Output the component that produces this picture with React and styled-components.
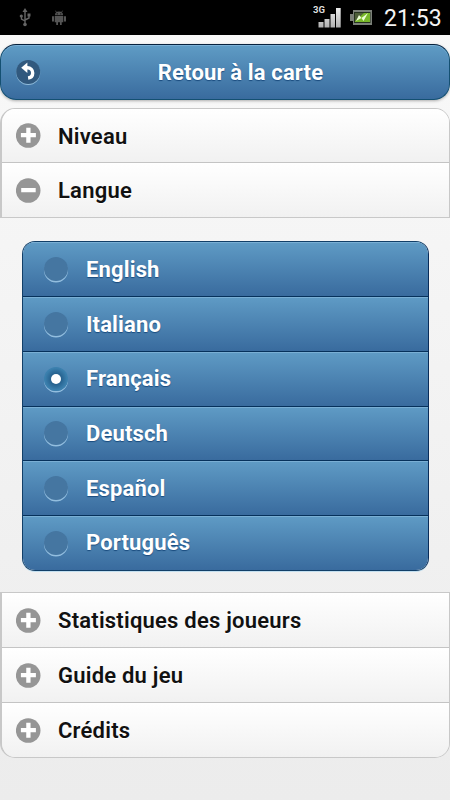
import React, { useState } from "react";
import styled, { createGlobalStyle } from "styled-components";

const GlobalStyle = createGlobalStyle`
  * {
    box-sizing: border-box;
  }
  body {
    margin: 0;
    background: #ececec;
    font-family: Roboto, "Liberation Sans", sans-serif;
  }
`;

const Page = styled.div`
  display: flex;
  flex-direction: column;
  height: 800px;
  overflow: hidden;
  background: linear-gradient(#f9f9f9, #ececec);
`;

const StatusBar = styled.div`
  display: flex;
  align-items: center;
  height: 35px;
  flex-shrink: 0;
  background: #000;
`;

const ClockText = styled.span`
  margin-left: 11px;
  width: 58px;
  padding-top: 2px;
  color: #f4f4f4;
  font-size: 23px;
  line-height: 28px;
  letter-spacing: 0.1px;
  white-space: nowrap;
`;

const BackButton = styled.button`
  display: flex;
  align-items: center;
  height: 56px;
  flex-shrink: 0;
  margin: 9px 0 8px;
  padding: 0 0 0 15px;
  border: 1px solid #145072;
  border-top: 1px solid #06213d;
  border-radius: 16px;
  background: linear-gradient(#5f9cc5, #396b9e);
  box-shadow: inset 0 1px 0 #7bb0d5, 0 1px 3px rgba(0, 0, 0, 0.3);
  font-family: inherit;
`;

const BackLabel = styled.span`
  flex: 1;
  margin-right: 9px;
  padding-top: 1px;
  color: #fff;
  font-size: 22px;
  font-weight: 700;
  letter-spacing: 0.15px;
  text-align: center;
  text-shadow: 0 1px 1px #194b7e;
`;

const Section = styled.div`
  display: flex;
  flex-direction: column;
  flex-shrink: 0;
  overflow: hidden;
  border: 1px solid #c8c8c8;
  border-left-width: 2px;
  border-radius: ${(props) => (props.$top ? "15px 15px 0 0" : "0 0 15px 15px")};
`;

const SectionRow = styled.div`
  display: flex;
  align-items: center;
  height: ${(props) => props.$height}px;
  padding-left: 14px;
  background: linear-gradient(#fff, #f1f1f1);
  color: #111;
  cursor: pointer;
  & + & {
    border-top: 1px solid #c4c4c4;
  }
`;

const RowLabel = styled.span`
  margin-left: 17px;
  padding-top: 2px;
  font-size: 22px;
  font-weight: 600;
  line-height: 28px;
  letter-spacing: 0.22px;
  white-space: nowrap;
  text-shadow: 0 1px 0 #fff;
`;

const Languages = styled.div`
  display: flex;
  flex-direction: column;
  flex-shrink: 0;
  height: 330px;
  margin: 23px 21px 21px 22px;
  overflow: hidden;
  border: 1px solid #123f68;
  border-right-color: #092c59;
  border-radius: 13px;
  box-shadow: 0 1px 0 #c3dfef;
`;

const LanguageRow = styled.label`
  display: flex;
  align-items: center;
  height: 54.7px;
  flex-shrink: 0;
  padding-left: 21px;
  background: linear-gradient(#5f9bc5, #396b9e);
  box-shadow: inset 0 1px 0 #7aafd4;
  color: #fff;
  cursor: pointer;
  &:first-child {
    height: 54.2px;
  }
  &:last-child {
    height: 55px;
  }
  & + & {
    border-top: 1px solid #06315b;
  }
`;

const HiddenRadio = styled.input`
  display: none;
`;

const Radio = styled.span`
  display: flex;
  align-items: center;
  justify-content: center;
  width: 24px;
  height: 24px;
  border-radius: 50%;
  background: ${(props) =>
    props.$checked
      ? "radial-gradient(circle, #255f8c 0 28%, #3b80ae 65%)"
      : "#4576a1"};
  box-shadow: 0 1.5px 0 rgba(174, 213, 242, 0.75);
`;

const RadioDot = styled.span`
  width: 10px;
  height: 10px;
  border-radius: 50%;
  background: #fff;
`;

const LanguageLabel = styled.span`
  margin-left: 18px;
  padding-top: 1px;
  font-size: 22px;
  font-weight: 700;
  line-height: 28px;
  letter-spacing: 0.15px;
  text-shadow: 0 1px 1px #194b7e;
`;

const StatusIcon = styled.svg`
  flex-shrink: 0;
  margin-left: ${(props) => props.$left}px;
`;

const UsbIcon = () => (
  <StatusIcon $left={19} width="12" height="19" viewBox="0 0 12 19" fill="none" stroke="#656565">
    <path d="M6 3v14M6 13L2.5 11V8M6 12l4-2V7" strokeWidth="1.4" />
    <path d="M6 0L3.5 4h5z" fill="#656565" stroke="none" />
    <circle cx="2.3" cy="8" r="1.6" fill="#656565" stroke="none" />
    <path d="M8.5 5.5h3v3h-3z" fill="#656565" stroke="none" />
    <circle cx="6" cy="16.5" r="1.8" fill="#656565" stroke="none" />
  </StatusIcon>
);

const AndroidIcon = () => (
  <StatusIcon $left={20} width="16" height="16" viewBox="0 0 16 16" fill="#555">
    <path d="M4 5.3a4 3.7 0 0 1 8 0zM3.7 6h8.6v6.2h-1.6V15H9v-2.8H7V15H5.2v-2.8H3.7z" />
    <rect x="1" y="6" width="2" height="5.7" rx="1" />
    <rect x="13" y="6" width="2" height="5.7" rx="1" />
    <path d="M5.5 2.5L4.5.7M10.5 2.5l1-1.8" stroke="#555" strokeWidth=".8" />
    <circle cx="6.2" cy="3.8" r=".6" fill="#000" />
    <circle cx="9.8" cy="3.8" r=".6" fill="#000" />
  </StatusIcon>
);

const SignalIcon = () => (
  <StatusIcon $left={246} width="30" height="25" viewBox="0 0 30 25">
    <defs>
      <linearGradient id="bars" x2="0" y2="1">
        <stop stopColor="#eee" />
        <stop offset="1" stopColor="#b0b0b0" />
      </linearGradient>
    </defs>
    <text x="0" y="8" fill="#ddd" fontSize="9.5" fontWeight="700" fontFamily="Roboto, sans-serif">3G</text>
    <g fill="url(#bars)">
      <path d="M5.5 17h5v5.5h-5zM11.5 14h5v8.5h-5zM17.5 9h4.5v13.5h-4.5zM23 3h4.7v19.5H23z" />
    </g>
  </StatusIcon>
);

const BatteryIcon = () => (
  <StatusIcon $left={6} width="24" height="17" viewBox="0 0 24 17">
    <path d="M1 5h3V1h19v15H4v-4H1z" fill="#7b8078" />
    <path d="M5 3h16.5v11H5z" fill="#26331f" />
    <path d="M6 4h15v9H6z" fill="#78b829" />
    <path d="M6 4h9L6 12z" fill="#4d5f38" />
    <path d="M7 12l3-6 2.5 3L19 4l-4.5 8-2-3z" fill="#edffd6" />
  </StatusIcon>
);

const BackIcon = () => (
  <svg width="25" height="27" viewBox="0 0 25 27">
    <circle cx="12.2" cy="14" r="12" fill="#91bddc" />
    <circle cx="12.2" cy="13" r="12" fill="#31597e" />
    <path d="M9 8.7h2.5a5.2 5.2 0 0 1 5.2 5.2c0 2.8-1.8 4.7-4.6 5.1" fill="none" stroke="#fff" strokeWidth="3.4" />
    <path d="M5.2 8.7l6.2-5.3v10.6z" fill="#fff" />
  </svg>
);

const ToggleIcon = ({ open }) => (
  <svg width="25" height="25" viewBox="0 0 25 25">
    <circle cx="12.2" cy="12.5" r="12.3" fill="#969696" />
    <path
      d={open ? "M5.2 12.2h14.5" : "M4.9 12.2h15M12.4 4.7v15"}
      stroke="#fff"
      strokeWidth="4.3"
    />
  </svg>
);

const topSections = [
  { label: "Niveau", height: 53 },
  { label: "Langue", height: 55, open: true },
];

const bottomSections = [
  { label: "Statistiques des joueurs", height: 54 },
  { label: "Guide du jeu", height: 55 },
  { label: "Crédits", height: 55 },
];

const languages = ["English", "Italiano", "Français", "Deutsch", "Español", "Português"];

const SectionList = ({ items, top }) => (
  <Section $top={top}>
    {items.map((item) => (
      <SectionRow key={item.label} $height={item.height}>
        <ToggleIcon open={item.open} />
        <RowLabel>{item.label}</RowLabel>
      </SectionRow>
    ))}
  </Section>
);

const App = () => {
  const [language, setLanguage] = useState("Français");

  return (
    <Page>
      <GlobalStyle />
      <StatusBar>
        <UsbIcon />
        <AndroidIcon />
        <SignalIcon />
        <BatteryIcon />
        <ClockText>21:53</ClockText>
      </StatusBar>
      <BackButton>
        <BackIcon />
        <BackLabel>Retour à la carte</BackLabel>
      </BackButton>
      <SectionList items={topSections} top />
      <Languages>
        {languages.map((name) => (
          <LanguageRow key={name}>
            <HiddenRadio
              type="radio"
              name="language"
              checked={language === name}
              onChange={() => setLanguage(name)}
            />
            <Radio $checked={language === name}>
              {language === name && <RadioDot />}
            </Radio>
            <LanguageLabel>{name}</LanguageLabel>
          </LanguageRow>
        ))}
      </Languages>
      <SectionList items={bottomSections} />
    </Page>
  );
};

export default App;
